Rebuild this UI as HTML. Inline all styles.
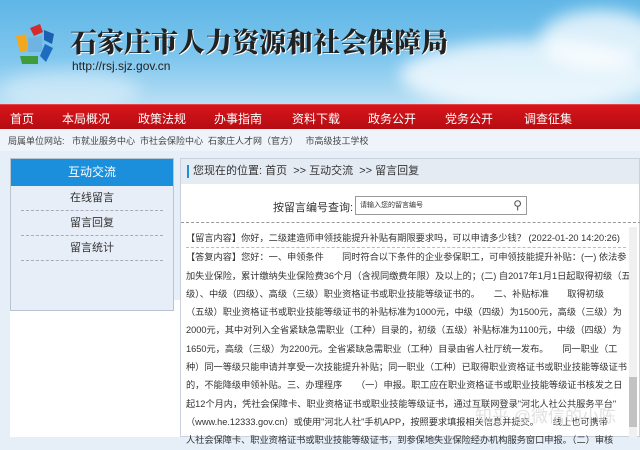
<!DOCTYPE html>
<html><head><meta charset="utf-8"><style>
*{margin:0;padding:0;box-sizing:border-box}
body{width:640px;height:437px;overflow:hidden;background:#e6eef7;font-family:"Liberation Sans","Noto Sans CJK SC",sans-serif;position:relative}
.hdr{position:absolute;left:0;top:0;width:640px;height:104px;background:linear-gradient(180deg,#5fb6e6 0%,#7ec6ee 55%,#b9dff4 100%)}
.cloud{position:absolute;border-radius:50%;background:rgba(255,255,255,.75);filter:blur(8px)}
.title{position:absolute;left:70px;top:21px;font-family:"Noto Serif CJK SC",serif;font-weight:900;font-size:27px;color:#222;text-shadow:1px 1px 0 #fff}
.url{position:absolute;left:72px;top:59px;font-size:12px;color:#222}
.nav{position:absolute;left:0;top:104px;width:640px;height:25px;background:linear-gradient(#d8141b,#b50d12);border-top:1px solid #e8454a}
.nav span{position:absolute;top:5px;font-size:12px;color:#fff}
.sub{position:absolute;left:0;top:129px;width:640px;height:22px;background:#eef4fa;font-size:9px;color:#444;padding:5px 0 0 8px}
.white{position:absolute;left:10px;top:300px;width:170px;height:137px;background:#fff}
.side{position:absolute;left:10px;top:158px;width:164px;height:153px;background:#e8eef8;border:1px solid #b8c4d2}
.side .act{height:27px;background:#1b8fdc;color:#fff;font-size:12px;text-align:center;line-height:27px}
.side .it{height:25px;margin:0 10px;border-bottom:1px dashed #aab;text-align:center;font-size:11px;line-height:25px;color:#333}
.main{position:absolute;left:180px;top:158px;width:460px;height:279px;background:#fff;border:1px solid #c9d2dc}
.bc{height:25px;background:#e4ebf3;font-size:11px;color:#333;line-height:25px;padding-left:12px;position:relative}
.bc:before{content:"";position:absolute;left:6px;top:6px;width:2px;height:13px;background:#1b8fdc}
.srch{position:absolute;left:92px;top:40px;font-size:11px;color:#333}
.inp{position:absolute;left:174px;top:37px;width:172px;height:19px;border:1px solid #999;font-size:7px;line-height:17px;padding-left:4px;color:#333}
.dot{position:absolute;left:0;top:63px;width:460px;border-top:1px dashed #999}
.txt{position:absolute;left:5px;top:70px;width:440px;font-size:9.2px;line-height:18.3px;color:#333;white-space:nowrap}
.sb{position:absolute;right:2px;top:68px;width:8px;height:211px;background:#f0f0f0}
.wm{position:absolute;left:475px;top:402px;font-size:17px;color:rgba(220,220,220,.85)}
</style></head><body>
<div class="hdr">
<div class="cloud" style="left:400px;top:40px;width:260px;height:70px"></div>
<div class="cloud" style="left:540px;top:10px;width:120px;height:60px"></div>
<div class="cloud" style="left:0;top:70px;width:140px;height:40px;opacity:.5"></div>
<svg style="position:absolute;left:10px;top:22px" width="48" height="46" viewBox="0 0 48 46">
<path d="M20 6 L30 2 L33 10 L24 14 Z" fill="#d52b2b"/>
<path d="M34 8 L44 12 L42 22 L34 18 Z" fill="#1c5fb0"/>
<path d="M35 22 L43 26 L36 40 L30 34 Z" fill="#1d6cc0"/>
<path d="M6 14 L16 12 L18 28 L10 30 Z" fill="#f2a71d"/>
<path d="M10 34 L28 34 L28 42 L12 42 Z" fill="#3e9c3c"/>
<path d="M18 16 L32 14 L32 30 L18 30 Z" fill="#6fb3e2"/>
</svg>
<div class="title">石家庄市人力资源和社会保障局</div>
<div class="url">http://rsj.sjz.gov.cn</div>
</div>
<div class="nav">
<span style="left:10px">首页</span><span style="left:62px">本局概况</span><span style="left:138px">政策法规</span><span style="left:214px">办事指南</span><span style="left:292px">资料下载</span><span style="left:368px">政务公开</span><span style="left:445px">党务公开</span><span style="left:524px">调查征集</span>
</div>
<div class="sub">局属单位网站:&nbsp;&nbsp;&nbsp;市就业服务中心&nbsp;&nbsp;市社会保险中心&nbsp;&nbsp;石家庄人才网（官方）&nbsp;&nbsp;&nbsp;市高级技工学校</div>
<div class="white"></div>
<div class="side">
<div class="act">互动交流</div>
<div class="it">在线留言</div>
<div class="it">留言回复</div>
<div class="it">留言统计</div>
</div>
<div class="main">
<div class="bc">您现在的位置:&nbsp;首页&nbsp;&nbsp;&gt;&gt; 互动交流&nbsp;&nbsp;&gt;&gt; 留言回复</div>
<div class="srch">按留言编号查询:</div>
<div class="inp">请输入您的留言编号<span style="position:absolute;right:4px;top:0;font-size:12px;color:#555">&#9906;</span></div>
<div class="dot"></div>
<div class="txt">
<div style="border-bottom:1px dashed #bbb">【留言内容】你好，二级建造师申领技能提升补贴有期限要求吗，可以申请多少钱？ (2022-01-20 14:20:26)</div>
<div>【答复内容】您好：一、申领条件　　同时符合以下条件的企业参保职工，可申领技能提升补贴：(一) 依法参</div>
<div>加失业保险，累计缴纳失业保险费36个月（含视同缴费年限）及以上的；(二) 自2017年1月1日起取得初级（五</div>
<div>级）、中级（四级）、高级（三级）职业资格证书或职业技能等级证书的。　　二、补贴标准　　取得初级</div>
<div>（五级）职业资格证书或职业技能等级证书的补贴标准为1000元，中级（四级）为1500元，高级（三级）为</div>
<div>2000元，其中对列入全省紧缺急需职业（工种）目录的，初级（五级）补贴标准为1100元，中级（四级）为</div>
<div>1650元，高级（三级）为2200元。全省紧缺急需职业（工种）目录由省人社厅统一发布。　　同一职业（工</div>
<div>种）同一等级只能申请并享受一次技能提升补贴；同一职业（工种）已取得职业资格证书或职业技能等级证书</div>
<div>的，不能降级申领补贴。三、办理程序　　（一）申报。职工应在职业资格证书或职业技能等级证书核发之日</div>
<div>起12个月内，凭社会保障卡、职业资格证书或职业技能等级证书，通过互联网登录"河北人社公共服务平台"</div>
<div>（www.he.12333.gov.cn）或使用"河北人社"手机APP，按照要求填报相关信息并提交。　　线上也可携带</div>
<div>人社会保障卡、职业资格证书或职业技能等级证书，到参保地失业保险经办机构服务窗口申报。（二）审核</div>
</div>
<div class="sb"><div style="position:absolute;top:150px;width:8px;height:50px;background:#c2c2c2"></div></div>
</div>
<div class="wm">知乎 @微信的小陈</div>
</body></html>
